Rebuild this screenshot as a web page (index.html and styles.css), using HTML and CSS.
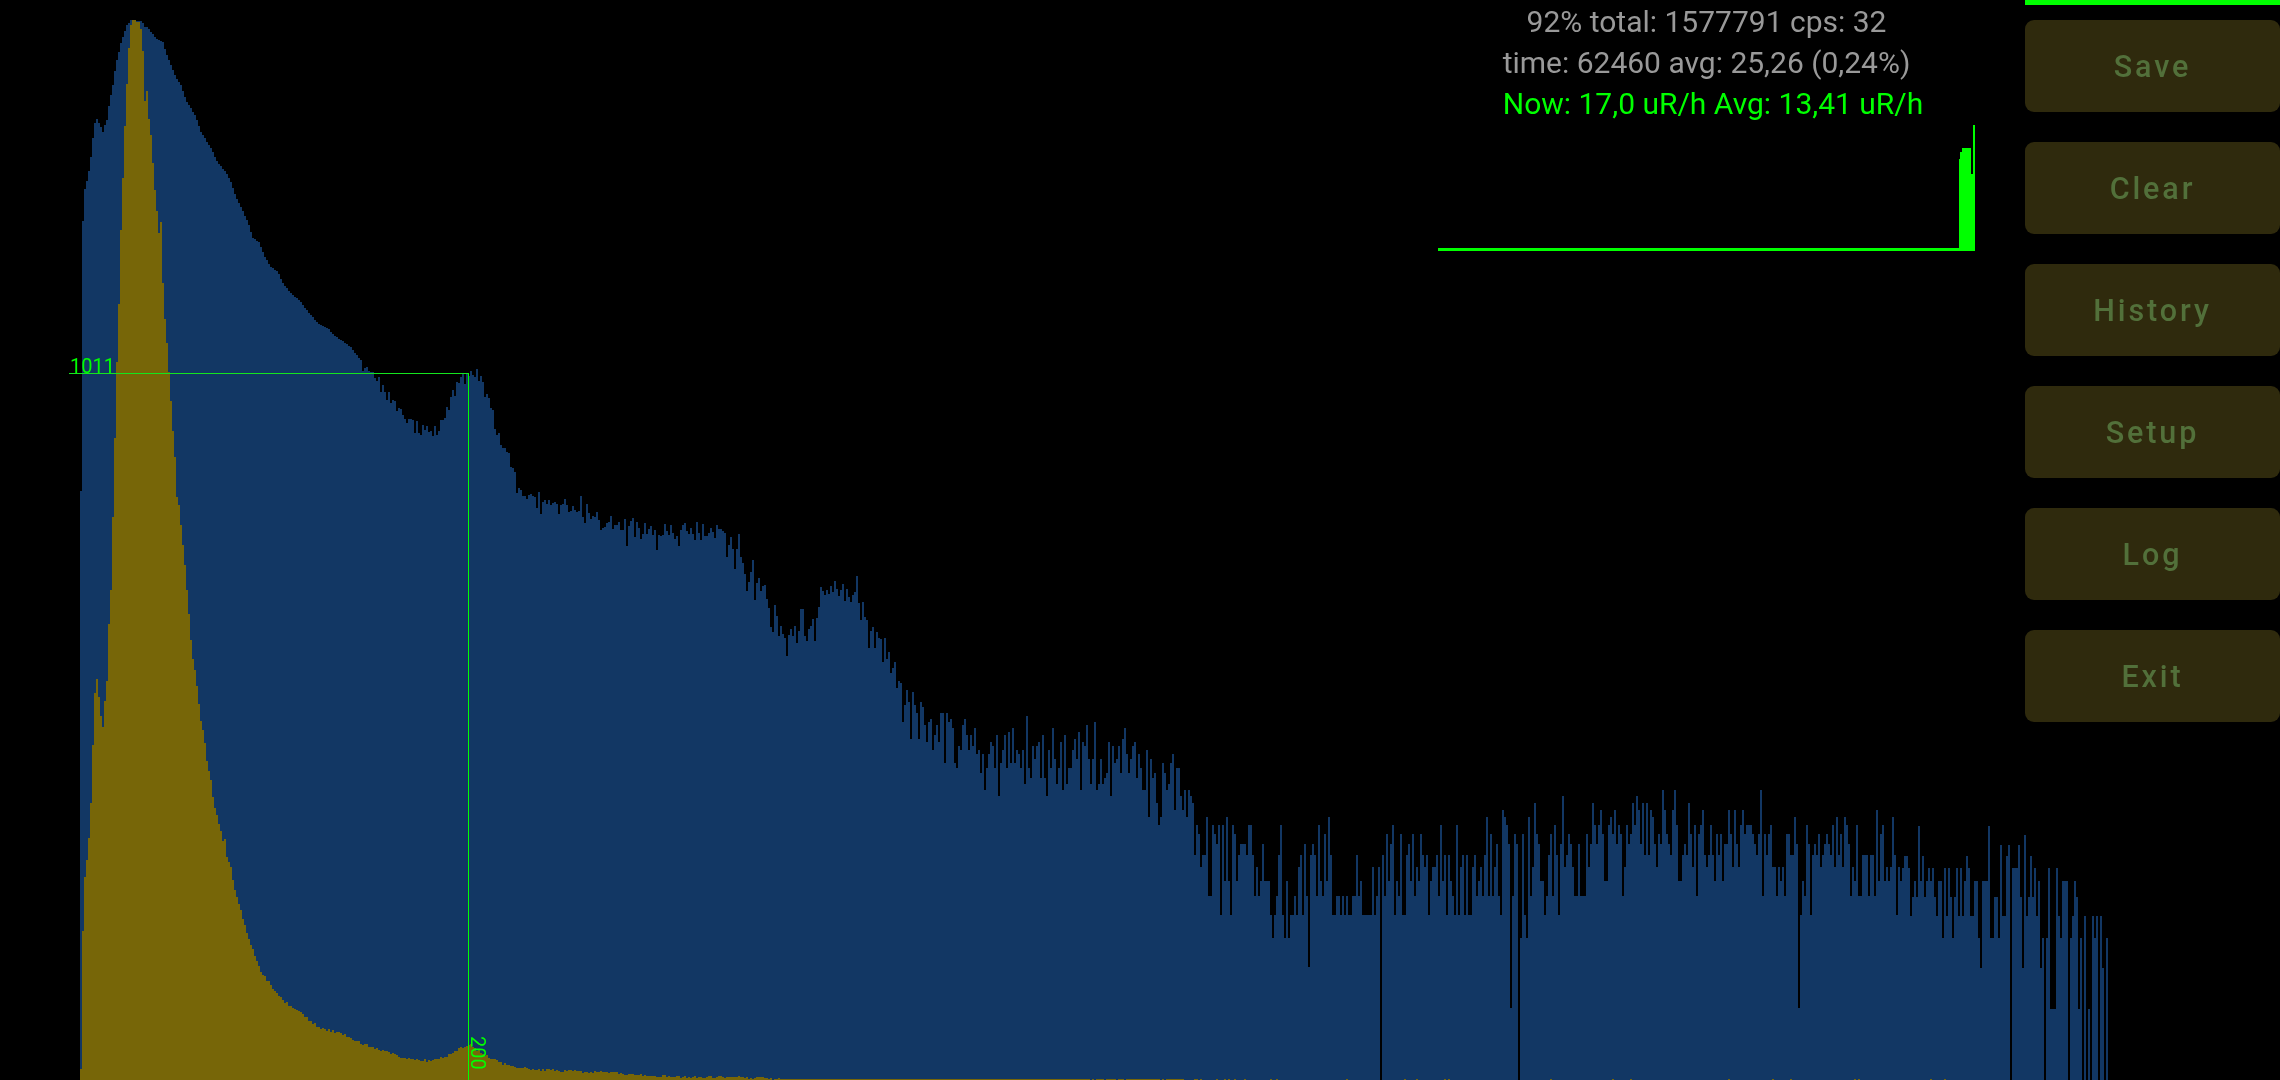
FILE: index.html
```html
<!DOCTYPE html>
<html lang="en">
<head>
<meta charset="utf-8">
<title>Spectrum</title>
<link rel="stylesheet" href="styles.css">
</head>
<body>
<main class="screen">
  <canvas id="spectrum" class="spectrum" width="2280" height="1080"></canvas>
  <span class="cursor-line cursor-h"></span>
  <span class="cursor-line cursor-v"></span>
  <span class="cursor-label count-label">1011</span>
  <span class="cursor-label channel-label">200</span>
  <div class="hud">
    <section class="stats">
      <p class="stat">92% total: 1577791 cps: 32</p>
      <p class="stat">time: 62460 avg: 25,26 (0,24%)</p>
      <p class="stat stat-dose">Now: 17,0 uR/h Avg: 13,41 uR/h</p>
      <svg class="trend" viewBox="0 0 537 126" width="537" height="126" aria-hidden="true" shape-rendering="crispEdges">
        <rect x="0" y="123" width="537" height="3" fill="#00ff00"/>
        <path d="M521 126V34H522V27H524V23H533V49H535V0H537V126Z" fill="#00ff00"/>
      </svg>
    </section>
    <nav class="panel">
      <div class="panel-bar"></div>
      <button class="action" disabled>Save</button>
      <button class="action" disabled>Clear</button>
      <button class="action" disabled>History</button>
      <button class="action" disabled>Setup</button>
      <button class="action" disabled>Log</button>
      <button class="action" disabled>Exit</button>
    </nav>
  </div>
</main>
<script src="chart.js"></script>
</body>
</html>
```

FILE: styles.css
```css
* { box-sizing: border-box; }
html, body { margin: 0; height: 100%; background: #000; overflow: hidden; }
.screen {
  position: relative;
  width: 2280px;
  height: 1080px;
  background: #000;
  font-family: Roboto, "Noto Sans", sans-serif;
}
.spectrum { position: absolute; left: 0; top: 0; display: block; }
.hud {
  position: relative;
  display: flex;
  justify-content: flex-end;
  align-items: flex-start;
}
.stats {
  width: 640px;
  padding-top: 1px;
  padding-left: 3px;
  display: flex;
  flex-direction: column;
  align-items: center;
}
.stat {
  margin: 0;
  font-size: 30px;
  line-height: 41px;
  color: #999;
  white-space: nowrap;
}
.stat-dose { color: #00ff00; margin-left: 13px; }
.trend { display: block; margin-top: 1px; }
.panel {
  width: 255px;
  display: flex;
  flex-direction: column;
  gap: 30px;
}
.panel-bar { height: 5px; margin-bottom: -15px; background: #00ff00; }
.action {
  height: 92px;
  padding: 0;
  border: 0;
  border-radius: 9px;
  background: #2f2a0d;
  color: #52703a;
  font-family: Roboto, sans-serif;
  font-size: 30.5px;
  font-weight: 500;
  letter-spacing: 2.9px;
  text-align: center;
}
.cursor-line { position: absolute; background: #00ff00; }
.cursor-h { left: 69px; top: 373px; width: 399px; height: 1px; background: #14e61e; }
.cursor-v { left: 468px; top: 373px; width: 1px; height: 707px; }
.cursor-label {
  position: absolute;
  color: #00ff00;
  font-size: 20px;
  line-height: 20px;
  font-weight: 400;
}
.count-label { left: 70px; top: 356px; }
.channel-label { left: 468px; top: 1036px; writing-mode: vertical-rl; }
```

FILE: chart.js
```js
(function () {
  var ctx = document.getElementById('spectrum').getContext('2d');
  var BLUE = '#123764', OLIVE = '#776608';
  var BOTTOM = 1080, SCALE = 71;

  // Log-scale curve: [x, top of bar]
  var logCurve = [[80,491],[82,221],[84,189],[86,181],[88,171],[90,157],[92,138],[94,123],[96,119],[98,123],
    [100,127],[102,132],[104,125],[106,120],[108,106],[110,95],[112,85],[114,71],[116,60],[118,52],[120,43],
    [122,37],[124,31],[126,25],[128,23],[130,20],[141,21],[144,27],[147,27],[150,32],[155,38],[162,42],[165,53],
    [170,65],[175,77],[180,85],[185,100],[190,108],[195,117],[200,132],[205,140],[210,148],[217,163],[225,172],
    [230,182],[235,197],[240,207],[247,222],[252,238],[258,242],[263,255],[270,267],[277,272],[282,283],[290,293],
    [300,302],[308,313],[317,323],[327,328],[333,335],[350,347],[363,365],[373,375],[387,398],[397,410],[413,427],
    [433,433],[443,420],[450,398],[460,377],[470,372],[480,379],[487,400],[493,420],[500,445],[507,458],[513,473],
    [520,492],[527,495],[540,505],[590,515],[640,530],[690,530],[723,535],[740,558],[757,585],[773,612],[783,638],
    [790,638],[803,630],[813,615],[825,603],[840,585],[857,595],[867,635],[887,657],[900,680],[910,710],[940,733],
    [950,742],[1000,750],[1067,756],[1133,756],[1153,795],[1183,797],[1217,850],[1250,838],[1273,880],[1333,885],
    [1400,872],[1450,885],[1500,862],[1567,868],[1600,840],[1650,830],[1700,840],[1767,830],[1800,852],[1867,860],
    [1900,878]];

  // Linear-scale curve: [x, top of bar]
  var linCurve = [[80,1069],[82,931],[84,877],[86,860],[88,838],[90,803],[92,745],[94,693],[96,679],[98,697],
    [100,716],[102,727],[104,701],[106,681],[108,624],[110,590],[112,517],[114,438],[116,362],[118,304],[120,230],
    [122,178],[124,126],[126,84],[128,48],[130,25],[132,20],[134,20],[136,22],[138,22],[140,29],[142,51],[144,101],
    [146,91],[148,119],[150,135],[152,163],[154,190],[156,211],[158,233],[160,222],[162,283],[164,319],[166,343],
    [168,372],[170,401],[172,431],[174,457],[176,497],[178,505],[180,525],[182,545],[184,565],[186,590],[188,614],
    [190,640],[192,659],[194,670],[196,686],[198,704],[200,721],[202,730],[204,743],[206,761],[208,771],[210,780],
    [212,797],[214,808],[216,815],[218,824],[220,831],[222,841],[224,839],[226,857],[228,862],[230,867],[232,880],
    [234,890],[236,897],[238,904],[240,910],[242,919],[244,925],[246,933],[248,939],[250,945],[260,972],[270,985],
    [280,998],[290,1007],[300,1012],[310,1022],[320,1028],[340,1033],[360,1043],[380,1050],[400,1057],[420,1060],
    [430,1061],[445,1057],[460,1047],[470,1045],[480,1053],[500,1063],[520,1068],[560,1071],[600,1072],[680,1077],
    [720,1077],[760,1078],[780,1079],[2000,1079]];

  // Tail of the log curve, bar by bar: [count of bars, top of bar]
  var tail = [[1,881],[1,868],[2,856],[1,868],[1,916],[1,897],[1,881],[1,897],[1,826],[1,881],[1,856],[1,897],
    [1,881],[1,868],[1,881],[1,868],[1,897],[1,916],[2,881],[1,938],[1,868],[1,916],[1,868],[1,897],[1,938],
    [1,897],[1,868],[1,916],[1,868],[1,916],[1,881],[1,856],[1,868],[2,916],[2,881],[1,938],[1,968],[3,881],
    [1,826],[2,938],[2,897],[1,938],[1,845],[2,916],[1,856],[1,845],[1,1080],[3,868],[1,845],[1,897],[1,968],
    [1,835],[1,916],[1,897],[1,856],[1,897],[1,868],[1,916],[1,881],[1,968],[1,938],[1,1080],[1,938],[1,868],
    [3,1009],[1,868],[1,916],[1,938],[3,881],[1,1080],[1,938],[1,916],[1,881],[1,897],[1,1009],[1,938],[1,1080],
    [1,916],[1,1080],[1,1009],[1,1080],[1,916],[1,938],[1,916],[1,1080],[1,916],[1,968],[1,1080],[1,938]];

  var fixedDips = { 1380: 1080, 1518: 1080, 1510: 1008, 1798: 1008 };

  var seed = 20240611;
  function rnd() {
    seed = (seed + 0x6D2B79F5) | 0;
    var t = Math.imul(seed ^ (seed >>> 15), 1 | seed);
    t = (t + Math.imul(t ^ (t >>> 7), 61 | t)) ^ t;
    return ((t ^ (t >>> 14)) >>> 0) / 4294967296;
  }
  function poisson(mean) {
    if (mean > 60) {
      var g = Math.sqrt(-2 * Math.log(rnd() + 1e-9)) * Math.cos(6.2831853 * rnd());
      return Math.max(0, Math.round(mean + g * Math.sqrt(mean)));
    }
    var limit = Math.exp(-mean), k = 0, p = 1;
    do { k++; p *= rnd(); } while (p > limit);
    return k - 1;
  }
  function interp(curve, x) {
    for (var i = 1; i < curve.length; i++) {
      if (x <= curve[i][0]) {
        var a = curve[i - 1], b = curve[i];
        return a[1] + (b[1] - a[1]) * (x - a[0]) / (b[0] - a[0]);
      }
    }
    return curve[curve.length - 1][1];
  }
  function logTop(x) {
    var y = interp(logCurve, x);
    if (x < 360) return Math.round(y);
    var mean = Math.pow(2, (BOTTOM - y) / SCALE) - 1;
    var n = Math.max(poisson(mean), x > 1000 ? 2 : 0);
    if (x > 1270 && n < 4 && rnd() < 0.75) n = 4;
    return Math.round(BOTTOM - SCALE * Math.log2(n + 1));
  }
  function olivePresence(x) {
    if (x < 1090) return 1;
    if (x < 1180) return 0.8;
    if (x < 1250) return 0.3;
    return 0.05;
  }

  ctx.fillStyle = BLUE;
  var x;
  for (x = 80; x < 1900; x += 2) {
    var top = fixedDips[x] !== undefined ? fixedDips[x] : logTop(x);
    ctx.fillRect(x, top, 2, BOTTOM - top);
  }
  x = 1900;
  tail.forEach(function (run) {
    ctx.fillRect(x, run[1], run[0] * 2, BOTTOM - run[1]);
    x += run[0] * 2;
  });

  ctx.fillStyle = OLIVE;
  for (x = 80; x < 2000; x += 2) {
    var t = interp(linCurve, x);
    if (x > 250 && x < 780) t += Math.round((rnd() - 0.5) * 2.4);
    t = Math.round(t);
    if (rnd() > olivePresence(x)) continue;
    ctx.fillRect(x, t, 2, BOTTOM - t);
  }
})();
```
